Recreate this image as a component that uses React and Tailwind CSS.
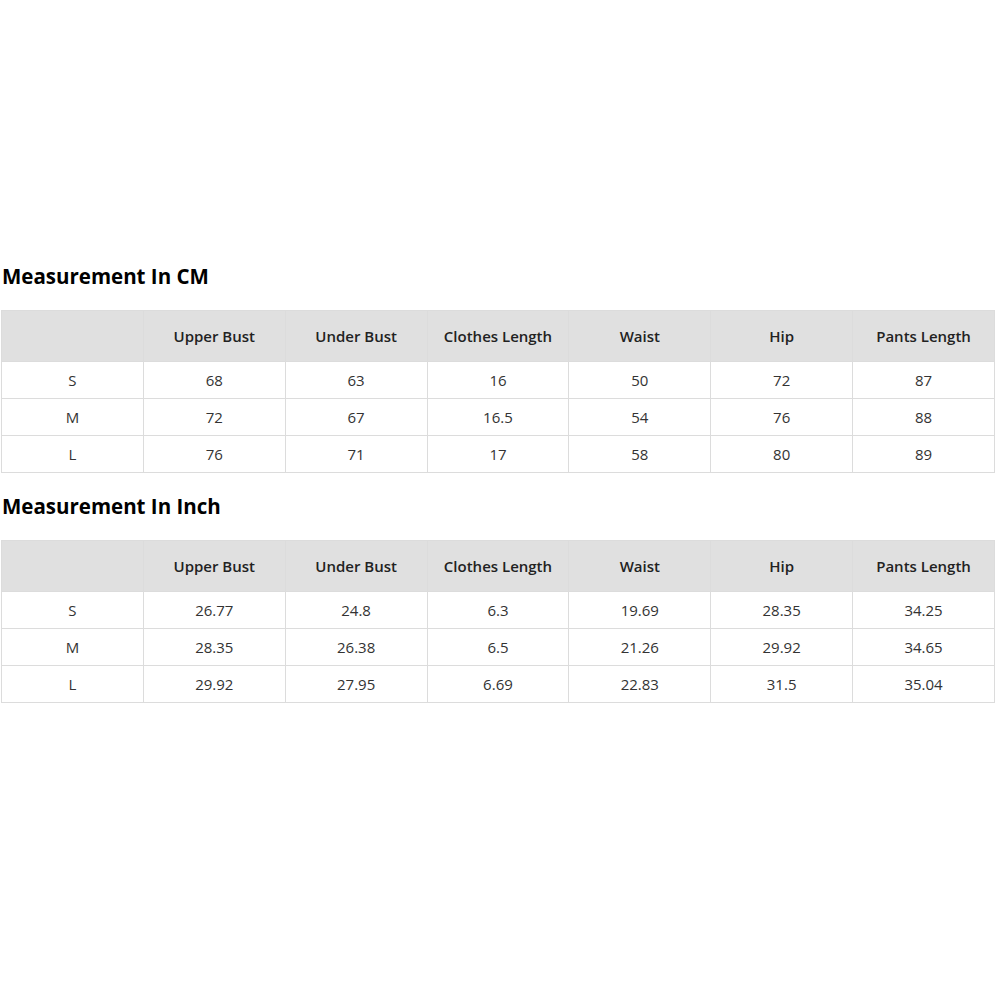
import React from 'react';

const headers = ['', 'Upper Bust', 'Under Bust', 'Clothes Length', 'Waist', 'Hip', 'Pants Length'];

const cmRows = [
    ['S', '68', '63', '16', '50', '72', '87'],
    ['M', '72', '67', '16.5', '54', '76', '88'],
    ['L', '76', '71', '17', '58', '80', '89'],
];

const inchRows = [
    ['S', '26.77', '24.8', '6.3', '19.69', '28.35', '34.25'],
    ['M', '28.35', '26.38', '6.5', '21.26', '29.92', '34.65'],
    ['L', '29.92', '27.95', '6.69', '22.83', '31.5', '35.04'],
];

const SizeTable = ({ title, rows }) => (
    <div>
        <h2 className="h-[28px] pl-[2px] text-[20.5px] leading-[28px] font-bold text-black">{title}</h2>
        <table className="mt-[20px] ml-px w-[994px] table-fixed border-collapse text-[15px] text-[#333]">
            <thead>
                <tr className="h-[51px] bg-[#e0e0e0]">
                    {headers.map((h, i) => (
                        <th key={i} className="border border-[#dcdcdc] text-center font-semibold text-[#222]">
                            {h}
                        </th>
                    ))}
                </tr>
            </thead>
            <tbody>
                {rows.map((row, r) => (
                    <tr key={r} className="h-[37px]">
                        {row.map((cell, c) => (
                            <td key={c} className="border border-[#dcdcdc] text-center">
                                {cell}
                            </td>
                        ))}
                    </tr>
                ))}
            </tbody>
        </table>
    </div>
);

export default function App() {
    return (
        <div className="min-h-[1000px] bg-white pt-[262px] font-['Open_Sans',sans-serif]">
            <SizeTable title="Measurement In CM" rows={cmRows} />
            <div className="mt-[19px]">
                <SizeTable title="Measurement In Inch" rows={inchRows} />
            </div>
        </div>
    );
}
